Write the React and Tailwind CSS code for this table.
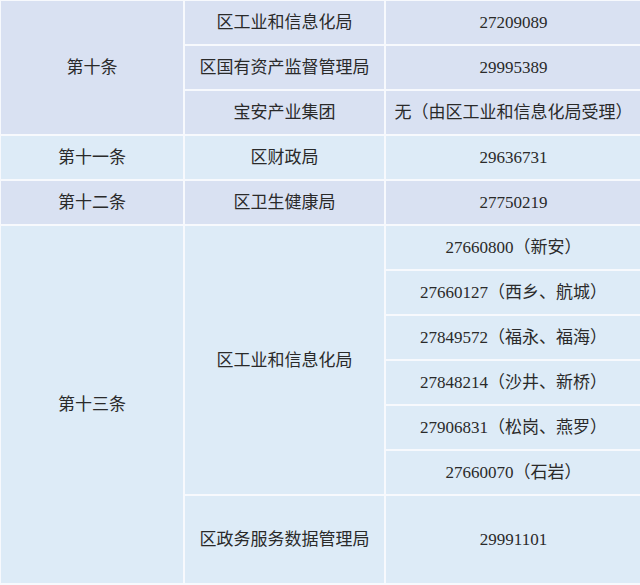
const cjk = '"Liberation Serif", "Noto Sans CJK SC", serif';

function Cell({ children, rowSpan, bg, h = 'h-[45px]' }) {
    return (
        <td
            rowSpan={rowSpan}
            className={`${bg} ${h} border-2 border-[#f7f9fd] text-center align-middle p-0`}
        >
            {children}
        </td>
    );
}

export default function App() {
    const a = 'bg-[#d9e1f2]';
    const b = 'bg-[#ddebf7]';

    return (
        <div className="w-[640px] h-[585px] bg-white overflow-hidden">
            <table
                className="w-[642px] -ml-[1px] -mt-[1px] table-fixed border-collapse text-[17px] leading-none text-[#2a2a2a]"
                style={{ fontFamily: cjk }}
            >
                <colgroup>
                    <col className="w-[184px]" />
                    <col className="w-[201px]" />
                    <col className="w-[257px]" />
                </colgroup>
                <tbody>
                    <tr>
                        <Cell rowSpan={3} bg={a}>第十条</Cell>
                        <Cell bg={a}>区工业和信息化局</Cell>
                        <Cell bg={a}>27209089</Cell>
                    </tr>
                    <tr>
                        <Cell bg={a}>区国有资产监督管理局</Cell>
                        <Cell bg={a}>29995389</Cell>
                    </tr>
                    <tr>
                        <Cell bg={a}>宝安产业集团</Cell>
                        <Cell bg={a}>无（由区工业和信息化局受理）</Cell>
                    </tr>
                    <tr>
                        <Cell bg={b}>第十一条</Cell>
                        <Cell bg={b}>区财政局</Cell>
                        <Cell bg={b}>29636731</Cell>
                    </tr>
                    <tr>
                        <Cell bg={a}>第十二条</Cell>
                        <Cell bg={a}>区卫生健康局</Cell>
                        <Cell bg={a}>27750219</Cell>
                    </tr>
                    <tr>
                        <Cell rowSpan={7} bg={b}>第十三条</Cell>
                        <Cell rowSpan={6} bg={b}>区工业和信息化局</Cell>
                        <Cell bg={b}>27660800（新安）</Cell>
                    </tr>
                    <tr>
                        <Cell bg={b}>27660127（西乡、航城）</Cell>
                    </tr>
                    <tr>
                        <Cell bg={b}>27849572（福永、福海）</Cell>
                    </tr>
                    <tr>
                        <Cell bg={b}>27848214（沙井、新桥）</Cell>
                    </tr>
                    <tr>
                        <Cell bg={b}>27906831（松岗、燕罗）</Cell>
                    </tr>
                    <tr>
                        <Cell bg={b}>27660070（石岩）</Cell>
                    </tr>
                    <tr>
                        <Cell bg={b} h="h-[89px]">区政务服务数据管理局</Cell>
                        <Cell bg={b} h="h-[89px]">29991101</Cell>
                    </tr>
                </tbody>
            </table>
        </div>
    );
}
